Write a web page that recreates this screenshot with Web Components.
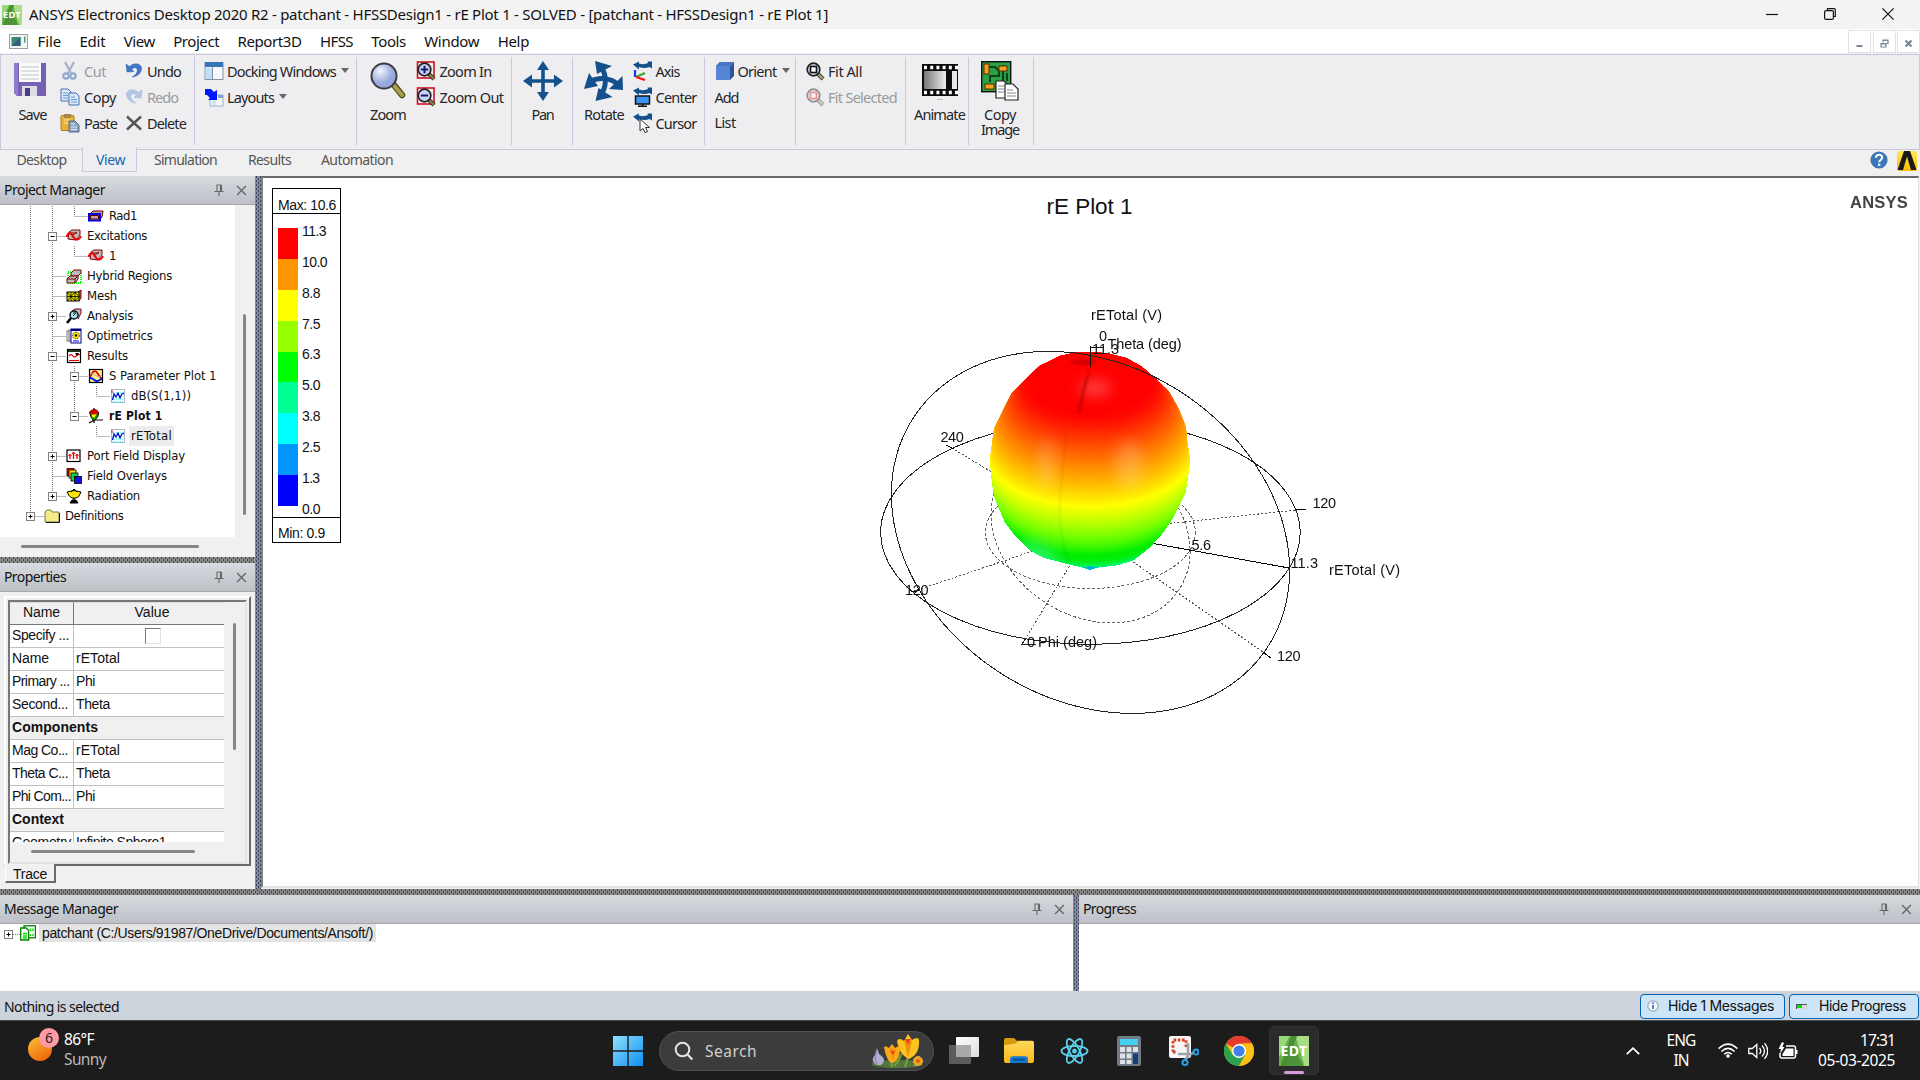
<!DOCTYPE html>
<html lang="en">
<head>
<meta charset="utf-8">
<title>ANSYS Electronics Desktop</title>
<style>
html,body{margin:0;padding:0;background:#f0f0f0;overflow:hidden}
body{width:1920px;height:1080px}
</style>
</head>
<body>
<app-shell></app-shell>
<script>
const UI='"Noto Sans","Open Sans",sans-serif', ARIAL='"Liberation Sans",Arial,sans-serif', TAHOMA='"DejaVu Sans Condensed","DejaVu Sans",sans-serif';
const define=(name,build,init)=>customElements.define(name,class extends HTMLElement{
  connectedCallback(){
    if(this.shadowRoot)return;
    this.attachShadow({mode:'open'}).innerHTML=build(this);
    if(init)init(this,this.shadowRoot);
  }
});

/* Text run whose tracking is adjusted to an exact advance width */
define('fit-text',()=>`<style>:host{display:inline-block;white-space:pre;flex:none}</style><slot></slot>`,el=>{
  const w=+el.getAttribute('w'); if(!w)return;
  const n=el.textContent.length, nat=el.getBoundingClientRect().width;
  el.style.letterSpacing=((w-nat)/n).toFixed(3)+'px';
  el.style.width=w+'px';
});
const T=(t,w,s='')=>`<fit-text w="${w}" style="${s}">${t}</fit-text>`;

/* Icon set: name -> [viewBox w, viewBox h, markup] */
const lens=(a,inner)=>`<path d="M13 13l5 5" stroke="#333" stroke-width="4"/><path d="M13.5 13.5l4.2 4.2" stroke="${a}" stroke-width="2.4"/><circle cx="8.5" cy="8.5" r="6.3" fill="#c9d2f2" stroke="#222" stroke-width="1.7"/>${inner}`;
const swoosh=`<path d="M0 3.500L6 .5v2q5 1.500 9-.5l-.5-1.500h4.500v7l-2.500-1.500q-5 2-10.500 0v2.500z" fill="#14508c"/>`;
const I={
 edt:[20,20,`<rect width="20" height="20" fill="#6ab04c"/><path d="M0 0h7L0 14z" fill="#9ad97a"/><path d="M11 0h9v20h-3z" fill="#a8dc86"/><path d="M8 0h4l-7 20H1z" fill="#4a8f35"/><path d="M9 6l7 14H5z" fill="#4c9238"/>`],
 doc:[19,15,`<rect x=".5" y=".5" width="18" height="14" fill="#f4f4f4" stroke="#9aa0a8"/><rect x="2.500" y="3" width="9" height="9" fill="#3d8577"/><path d="M2.500 12l9-9v9z" fill="#2f6075"/><rect x="15" y="2.500" width="1.500" height="6" fill="#3da06d"/>`],
 save:[34,36,`<path d="M1 2h32v33H4l-3-3z" fill="#7560b4"/><path d="M1 2h4v33l-4-3z" fill="#8f7bc9"/><rect x="6" y="2" width="22" height="19" fill="#fafafa"/><path d="M8 6h18M8 10h18M8 14h18M8 18h18" stroke="#c3c3cb" stroke-width="1.200"/><rect x="9" y="25" width="15" height="10" fill="#dcdce4"/><rect x="12" y="27" width="5" height="8" fill="#4c3b85"/>`],
 cut:[20,20,`<g stroke="#8ea9cf" fill="none"><path d="M5 1l6 11M14 1L8 12" stroke="#aab4c3" stroke-width="2.400"/><circle cx="6" cy="15" r="2.700" stroke-width="2.200"/><circle cx="13" cy="15" r="2.700" stroke-width="2.200"/></g>`],
 copy:[20,20,`<g stroke="#4573b3" fill="#dce9fa"><path d="M1 2h7l3 3v9H1z"/><path d="M9 6h7l3 3v9H9z"/></g><path d="M3 6h5M3 8.500h5M3 11h5M11 10h4M11 12.500h6M11 15h6" stroke="#6b96cf"/>`],
 paste:[20,20,`<rect x="1" y="2.500" width="13" height="15" rx="1" fill="#eab234" stroke="#b07a12"/><rect x="4" y="1" width="7" height="4" fill="#a8864a"/><path d="M4 7h7M4 10h5" stroke="#fbe4a5"/><path d="M9 8h6l4 4v7H9z" fill="#8ea3bf" stroke="#53698a"/><path d="M11 11h4M11 14h6M11 16.500h6" stroke="#e4ecf7"/>`],
 undo:[18,20,`<path d="M1 3l1 8 7-.5-2.300-2C9.500 5 13.500 7 12 11c-.8 2.500-3 4-5 5 5-.3 9-3.500 9.500-8C17 3 10 .5 4.500 5.500z" fill="#3e78c8" stroke="#2a5dab" stroke-width=".5"/>`],
 redo:[18,20,`<path d="M17 3l-1 8-7-.5 2.300-2C8.500 5 4.500 7 6 11c.8 2.500 3 4 5 5-5-.3-9-3.500-9.500-8C1 3 8 .5 13.500 5.500z" fill="#b3c6e4" stroke="#9db4d8" stroke-width=".5"/>`],
 del:[18,20,`<path d="M2 3.500l14 13M16 3.500l-14 13" stroke="#555" stroke-width="2.400"/>`],
 dock:[20,20,`<rect x="1" y="1.500" width="18" height="17" fill="#f4f7fb" stroke="#8494a8"/><rect x="1" y="1" width="18" height="5" fill="#3873b5"/><rect x="2" y="7" width="6" height="11" fill="#bfe0f4"/><path d="M8.500 6v12" stroke="#8494a8"/>`],
 layouts:[20,20,`<rect x="6" y="8" width="13" height="11" fill="#f4f7fb" stroke="#8fb1cf"/><path d="M8 12v6h4v-6z" fill="#cfe5f2"/><rect x="14" y="8" width="5" height="3" fill="#7fa5cc"/><path d="M1 2h6l3 3 3-2v10H4l2-2-3-3H1z" fill="#0018ff"/>`],
 zoom:[36,38,`<path d="M24 24l8 10" stroke="#555018" stroke-width="6.500" stroke-linecap="round"/><path d="M24.500 25l7.500 9" stroke="#a8a050" stroke-width="4" stroke-linecap="round"/><defs><radialGradient id="g" cx=".35" cy=".3"><stop stop-color="#f1f5ff"/><stop offset="1" stop-color="#97a8dc"/></radialGradient></defs><circle cx="14" cy="15" r="12.500" fill="url(#g)" stroke="#3c3c44" stroke-width="2"/>`],
 zin:[20,20,`<rect x="1.500" y="1" width="16.500" height="16" fill="none" stroke="#d01020" stroke-width="1.600"/>${lens('#8a8436','<path d="M8.500 4.800v7.400M4.800 8.500h7.400" stroke="#1b1b6e" stroke-width="2"/>')}`],
 zout:[20,20,`<rect x="1.500" y="1" width="16.500" height="16" fill="none" stroke="#d01020" stroke-width="1.600"/>${lens('#8a8436','<path d="M4.800 8.500h7.400" stroke="#1b1b6e" stroke-width="2"/>')}`],
 fit:[20,20,lens('#a8a878','<rect x="5.500" y="5.500" width="6" height="6" fill="#fff" stroke="#111" stroke-width="1.600"/>')],
 fits:[20,20,`<g opacity=".45">${lens('#a8a878','<rect x="5.500" y="5.500" width="6" height="6" fill="#fff" stroke="#f03020" stroke-width="1.800"/>')}</g>`],
 pan:[40,40,`<path d="M20 0l6 9h-4.200v9.200H31V13.500l9 6.500-9 6.500v-4.700h-9.200V31H26l-6 9-6-9h4.200v-9.200H9v4.700L0 20l9-6.500v4.700h9.200V9H14z" fill="#14508c"/>`],
 rotate:[40,40,`<g fill="none" stroke="#14508c" stroke-width="5"><path d="M17 6c6 8 6 20-1 29"/><path d="M5 21c9-5 21-5 30 3"/></g><path d="M11 0l17 5-15 8zM11.500 40l17-4-14-9zM0 28l5-16 9 13zM38.500 15l.5 14-14-1z" fill="#14508c"/>`],
 axis:[20,20,`${swoosh}<path d="M2 9v7" stroke="#1438ff" stroke-width="2.200"/><path d="M3 16l9-4" stroke="#35a835" stroke-width="2"/><path d="M3 16l9 3" stroke="#ff1010" stroke-width="2.200"/>`],
 center:[20,20,`${swoosh}<rect x="2.500" y="9" width="14" height="8" fill="#3d93ee" stroke="#111" stroke-width="1.500"/><path d="M9.500 17v2M5 19.300h9" stroke="#111" stroke-width="1.500"/>`],
 cursor:[20,20,`${swoosh}<path d="M7 6v12l3-2.500 2 4 2.500-1-2-4h4z" fill="#fff" stroke="#333"/>`],
 orient:[20,20,`<path d="M1 5l4-4h14v14l-4 4H1z" fill="#2d5597"/><path d="M1 5l4-4h14l-3 4z" fill="#4a77bd"/><path d="M1 5h14v14H1z" fill="#5684d6"/>`],
 animate:[36,38,`<path d="M0 1h36v32H0z" fill="#0c0c0c"/><defs><linearGradient id="g"><stop stop-color="#777"/><stop offset="1" stop-color="#eee"/></linearGradient></defs><rect x="2" y="8" width="22" height="18" fill="url(#g)"/><rect x="30" y="8" width="5" height="18" fill="#e8e8e8"/><path d="M2 4.500h34M2 29.500h34" stroke="#fff" stroke-width="3.500" stroke-dasharray="3 3.200"/><path d="M15 36.500h6" stroke="#bbb"/>`],
 copyimg:[38,40,`<rect x=".7" y=".7" width="29" height="30" fill="#2ca044" stroke="#111" stroke-width="1.400"/><path d="M8 6h6l4 4v5h-9v6M22 4v26M26 12v8" stroke="#0b4316" fill="none" stroke-width="2"/><g fill="#f5a21d" stroke="#5a2a00"><rect x="3" y="3" width="5" height="10"/><rect x="18" y="5" width="8" height="5"/><rect x="4" y="23" width="9" height="5"/></g><g fill="#fff" stroke="#222" stroke-width="1.200"><path d="M15 20h8l4 4v13H15z"/><path d="M24 23h8l5 5v11H24z"/></g><path d="M17 25h6M17 28h6M17 31h6M26 29h6M26 32h9M26 35h9" stroke="#888"/>`],
 help:[18,18,`<circle cx="9" cy="9" r="8.600" fill="#3a77b8"/><path d="M6 6.800c0-4 6.200-3.800 6.200-.3 0 2.200-3 2.300-3 4.800" stroke="#fff" stroke-width="2" fill="none"/><rect x="8" y="12.600" width="2.300" height="2.300" fill="#fff"/>`],
 alogo:[20,20,`<defs><linearGradient id="g" x2="0" y2="1"><stop stop-color="#ffe85a"/><stop offset="1" stop-color="#fdb900"/></linearGradient></defs><rect width="20" height="20" rx="3" fill="url(#g)"/><path d="M7 0h6l6.500 19h-5.500L10 5.500 6 19H.5z" fill="#1a1a1a"/>`],
 pin:[10,12,`<path d="M2.500 1h5M3 1v6M6.500 1v6M7.500 1v6M.5 7.500h9M5 8v4" stroke="#666" stroke-width="1.100" fill="none"/>`],
 x:[12,12,`<path d="M1.200 1.200l9.600 9.600M10.800 1.200l-9.600 9.600" stroke="#666" stroke-width="1.500"/>`],
 wmin:[12,12,`<path d="M0 6.500h12" stroke="#111" stroke-width="1.200"/>`],
 wres:[12,12,`<path d="M3.500 2.500V.7h6.500q1.300 0 1.300 1.300v6.500H9.500" fill="none" stroke="#111" stroke-width="1.200"/><rect x=".6" y="2.600" width="8.800" height="8.800" rx="1.500" fill="none" stroke="#111" stroke-width="1.200"/>`],
 wx:[12,12,`<path d="M.4.4l11.200 11.200M11.600.4L.4 11.600" stroke="#111" stroke-width="1.200"/>`],
 mmin:[9,9,`<path d="M1.500 7h6" stroke="#76889a" stroke-width="2"/>`],
 mres:[9,9,`<path d="M3 3.500V1h5v3.500H6.500M3 1.500h5" fill="none" stroke="#76889a" stroke-width="1.200"/><path d="M1 4.500h5v3.500H1zM1 5h5" fill="none" stroke="#76889a" stroke-width="1.200"/>`],
 mx:[9,9,`<path d="M1.500 1.500l6 6M7.500 1.500l-6 6" stroke="#76889a" stroke-width="2.200"/>`],
 rad:[16,16,`<path d="M1 7l4-4h10l-1 6-3 3z" fill="#c9a0a0" stroke="#600"/><rect x="1" y="6" width="11" height="6.500" fill="#b8a8a8" stroke="#0000e0" stroke-width="2"/><path d="M2.500 7.500h8v3.500h-8z" fill="none" stroke="#600"/>`],
 exc:[16,16,`<path d="M3 4l3-2h8v5l-4 5-8-1z" fill="#bbb" stroke="#800"/><path d="M4 5h7M6 8l5-4" stroke="#800"/><path d="M.5 9c2-6 5-4 7 0s6 3 7.500-1" fill="none" stroke="#f00000" stroke-width="2"/>`],
 hyb:[16,16,`<path d="M2 4h13v11H2z" fill="none" stroke="#0f0" stroke-width="2" stroke-dasharray="1 1"/><path d="M5 5l3-3h7v3l-3 3H5z" fill="#bbb" stroke="#700"/><path d="M1 11l3-3h8v3l-3 4H1z" fill="#bbb" stroke="#700"/><path d="M1 11h8v3M9 11l3-3" fill="none" stroke="#700"/>`],
 mesh:[16,16,`<path d="M12 4l3-2v8l-2 3" fill="#a77" stroke="#700"/><rect x="1" y="4" width="12" height="9" fill="#f4e800" stroke="#000"/><path d="M5 4v9M9 4v9M1 8.500h12M1 4l4 4.500L9 4l4 4.500M1 13l4-4.500 4 4.500 4-4.500" fill="none" stroke="#000" stroke-width=".8"/>`],
 ana:[16,16,`<path d="M6 3l3-2h6v4l-3 6" fill="#bbb" stroke="#700"/><circle cx="8" cy="7" r="4" fill="#9fe8f0" stroke="#112" stroke-width="1.500"/><path d="M7 5h3M7 8l3-3" stroke="#700"/><path d="M5 10l-4 5" stroke="#000" stroke-width="2.600"/>`],
 opt:[16,16,`<rect x="1" y="3" width="10" height="10" fill="#fff" stroke="#777"/><rect x="3" y="2" width="10" height="11" fill="#ddd" stroke="#777"/><rect x="5" y="1" width="10" height="14" fill="#fff" stroke="#000080"/><path d="M5 2h10" stroke="#000080" stroke-width="2"/><circle cx="10" cy="7.500" r="3.400" fill="#ffe000" stroke="#333" stroke-dasharray="1.500 1"/><circle cx="10" cy="7.500" r="1.200"/><path d="M7 13h6" stroke="#00f"/>`],
 res:[16,16,`<rect x="1.500" y="1.500" width="13" height="13" fill="#fff" stroke="#000" stroke-width="1.200"/><path d="M2 3h12" stroke="#183818" stroke-width="2"/><path d="M3 8c3-4 4 2 6 1s2-4 5-2M3 12.500h10" fill="none" stroke="#e00000" stroke-width="1.200"/><path d="M9 5h4l-2 3z"/>`],
 spar:[16,16,`<rect x="1.500" y="1.500" width="13" height="13" fill="#fff38a" stroke="#000" stroke-width="1.200"/><path d="M2 9c3-6 5-8 8-3s3 4 4 4" fill="none" stroke="#e80000" stroke-width="1.800"/><path d="M2 10c4 0 4 3 7 3 2 0 3-2 5-2" fill="none" stroke="#0020e0" stroke-width="2"/><path d="M2 6c5-2 7 6 12 1" fill="none" stroke="#aaa"/>`],
 trace:[16,16,`<rect x="1.500" y="1.500" width="13" height="13" fill="#f4ffff" stroke="#b4b4c0"/><path d="M2 5h12M2 11h12M2 14h12" stroke="#50d8e8" stroke-dasharray="1 1"/><path d="M2.500 12l1.500-6 2 3 2-4 2 5 2-4 2-1" fill="none" stroke="#0010d0" stroke-width="1.300"/><path d="M2 2v3" stroke="#f00"/>`],
 re:[16,16,`<path d="M6 0v15M1 15l5-3h9" stroke="#000" fill="none" stroke-width="1.200"/><path d="M1.500 4q5-5 9 0 1 4-4.500 9Q2 9 1.500 4z" fill="#00a000" stroke="#200"/><path d="M2 3.500q4-4 8.300 0l-1 3H3z" fill="#e00000"/><path d="M3.500 6.500h5l-2 3h-2z" fill="#ff0"/>`],
 port:[16,16,`<rect x="1" y="2" width="13" height="11.500" fill="#fff" stroke="#000" stroke-width="1.200"/><path d="M4 11V7M7.500 11V4.500M11 11V7" stroke="#e00000" stroke-width="1.300"/><path d="M2.500 8l1.500-2 1.500 2M6 6l1.500-2L9 6M9.500 8L11 6l1.500 2" fill="none" stroke="#e00000"/>`],
 field:[16,16,`<g stroke="#000" stroke-width=".8"><rect x="1" y="0" width="7" height="8" fill="#e81010"/><rect x="3" y="2" width="7" height="8" fill="#ffe000"/><rect x="5" y="5" width="7" height="8" fill="#10d060"/><rect x="8.500" y="8.500" width="7" height="7" fill="#1010e0"/></g>`],
 radn:[16,16,`<path d="M1 4q7-3 14 0-2 6-5 6H6Q3 9 1 4z" fill="#ffe900" stroke="#000"/><path d="M8 10v3M4 15h8l-2-3H6z" fill="#000" stroke="#000"/><path d="M5 4l3-3 3 3" fill="none" stroke="#000"/>`],
 folder:[16,16,`<path d="M1 4l2-2h4l1 2h7v10H1z" fill="#f2eb86" stroke="#7a7a58"/><path d="M15.500 5v9.500H2" fill="none" stroke="#111"/>`],
 proj:[16,16,`<g fill="#fff" stroke="#008000"><rect x="4" y=".8" width="11.400" height="12" stroke-width="1.300"/><path d="M.7 3h5.500l2.500 2.500V15h-8z" stroke-width="1.300"/></g><path d="M10.500 3.500v2.500M13 3.500v2.500M10.500 9v2M13 9v2M3 8.500h4M3 11h4M3 13h4" fill="none" stroke="#00e000" stroke-width="1.400"/>`],
 info:[12,12,`<circle cx="6" cy="6" r="5.200" fill="#f4f8ff" stroke="#9aa" stroke-width="1.200"/><path d="M6 5v4M6 2.500V4" stroke="#2a52c8" stroke-width="1.500"/>`],
 prog:[11,5,`<rect width="11" height="5" fill="#d6d6d6"/><path d="M0 .5h11M.5 0v5" stroke="#555"/><rect x="1" y="1" width="5" height="3" fill="#00e000"/>`],
 win:[30,30,`<defs><linearGradient id="g" x2="1" y2="1"><stop stop-color="#8fe2fd"/><stop offset="1" stop-color="#0d8ff2"/></linearGradient></defs><path d="M0 0h14.300v14.300H0zM15.700 0H30v14.300H15.700zM0 15.700h14.300V30H0zM15.700 15.700H30V30H15.700z" fill="url(#g)"/>`],
 search:[20,20,`<circle cx="8.500" cy="8.500" r="6.800" fill="none" stroke="#e4e4e4" stroke-width="2"/><path d="M13.300 13.300l5 5.200" stroke="#e4e4e4" stroke-width="2.200"/>`],
 flower:[56,34,`<ellipse cx="27" cy="30" rx="26" ry="4" fill="#54743e"/><path d="M22 33q-2-8-1-14M35 33q3-8 3-14M44 32q4-3 4-6M24 32q6-6 7-12" stroke="#6da33a" stroke-width="2.200" fill="none"/><path d="M7 31q-8-5-1-11l1-6 2 6q9 6 2 11z" fill="#b3aed2"/><path d="M7 15q-4 8 0 15" stroke="#807aaa" fill="none"/><path d="M14 13q1-2 5 1l3-4 3 4q3-3 5 0 0 12-7 15-6 0-9-16z" fill="#fba91a"/><path d="M27 7q2-4 7 0l4-7 4 6q6-4 7 0 1 14-10 19-10-4-12-18z" fill="#ffc21c"/><path d="M34 6l4 18 4-17M19 14l4 13 3-12" fill="#f0930c"/><path d="M35 5h6l-3 6zM20 17h5l-2 4z" fill="#e8481a"/><circle cx="48" cy="27" r="4.500" fill="#f2a01e" stroke="#ffc95a" stroke-dasharray="2 1"/><circle cx="48" cy="27" r="1.800" fill="#d05018"/>`],
 task:[30,28,`<defs><linearGradient id="g" x2="1" y2="1"><stop stop-color="#fff"/><stop offset="1" stop-color="#ddd"/></linearGradient></defs><rect x="7" width="23" height="20" rx="1" fill="url(#g)"/><rect y="8" width="22" height="19" rx="1" fill="#5c5c5c"/><rect x="7" y="8" width="15" height="12" fill="#a9a9a9"/>`],
 files:[30,28,`<path d="M0 3q0-2 2-2h8l3 3v4H0z" fill="#d99a07"/><defs><linearGradient id="g" x2="0" y2="1"><stop stop-color="#ffd75c"/><stop offset="1" stop-color="#fbb816"/></linearGradient></defs><path d="M0 8l11-1 3-3h14q2 0 2 2v19q0 2-2 2H2q-2 0-2-2z" fill="url(#g)"/><path d="M6 27v-4q0-3 3-3h12q3 0 3 3v4z" fill="#1279cf"/><path d="M9 23.500h12" stroke="#0a4f93" stroke-width="2"/>`],
 react:[30,28,`<g fill="none" stroke="#5ccfea" stroke-width="1.800"><ellipse cx="15" cy="14" rx="13.500" ry="5"/><ellipse cx="15" cy="14" rx="13.500" ry="5" transform="rotate(60 15 14)"/><ellipse cx="15" cy="14" rx="13.500" ry="5" transform="rotate(120 15 14)"/></g><circle cx="15" cy="14" r="2.500" fill="#5ccfea"/>`],
 calc:[24,30,`<rect width="24" height="30" rx="2" fill="#717b86"/><rect x="3" y="3" width="18" height="6" fill="#45d0f0"/><g fill="#dce3ea"><path d="M3 11h5v5H3zM9.500 11h5v5h-5zM16 11h5v5h-5zM3 17.500h5v5H3zM9.500 17.500h5v5h-5zM3 24h5v4H3zM9.500 24h5v4h-5z"/></g><rect x="16" y="17.500" width="5" height="10.500" fill="#123f7a"/>`],
 snip:[30,30,`<rect width="22" height="22" rx="2" fill="#f6f6f6"/><path d="M4 16V4h13v8M4 16h4" fill="none" stroke="#d8401c" stroke-width="2.800" stroke-dasharray="2.600 1.600"/><path d="M19 7v13l-3 4M9 18h13l3-1.500" fill="none" stroke="#9aa4ae" stroke-width="2.600"/><circle cx="27" cy="16" r="2.500" fill="none" stroke="#27a0e8" stroke-width="2"/><circle cx="16" cy="26.500" r="2.500" fill="none" stroke="#27a0e8" stroke-width="2"/>`],
 chrome:[30,30,`<circle cx="15" cy="15" r="15" fill="#fbc116"/><path d="M15 15L2 7.500A15 15 0 0 1 28 7.500H15z" fill="#e33b2e"/><path d="M2 7.500A15 15 0 0 0 15 30l6.500-11.300L15 15 8.500 18.800z" fill="#2ba24c"/><path d="M28 7.500A15 15 0 0 1 15 30l6.500-11.300L20 7.500z" fill="#fbc116"/><circle cx="15" cy="15" r="7" fill="#fff"/><circle cx="15" cy="15" r="5.600" fill="#3f7fe8"/>`],
 up:[14,8,`<path d="M.8 7.200L7 1.200l6.200 6" fill="none" stroke="#fff" stroke-width="1.700"/>`],
 wifi:[20,15,`<g fill="none" stroke="#fff" stroke-width="1.500"><path d="M.6 5.600q9.400-9 18.800 0M3.400 8.500q6.600-6.300 13.200 0M6.200 11.300q3.800-3.700 7.600 0"/></g><circle cx="10" cy="13" r="1.800" fill="#fff"/>`],
 vol:[20,18,`<g fill="none" stroke="#fff" stroke-width="1.300"><path d="M.8 6.500h3.500L8.800 2.500v13L4.300 11.500H.8z"/><path d="M11.500 6q2.500 3 0 6M14 3.500q5 5.500 0 11M16.500 1.200q6.500 7.800 0 15.600"/></g>`],
 bat:[20,18,`<path d="M8 4h7.500q2 0 2 2v8q0 2-2 2H4q-2 0-2-2v-3" fill="none" stroke="#fff" stroke-width="1.500"/><path d="M8 6.500h7.500v7.500H4.500V12z" fill="#fff"/><path d="M18.500 8v4" stroke="#fff" stroke-width="2"/><path d="M4 0L.5 7H3l-1 5 4.500-7H4.300L6 1z" fill="#fff"/>`],
 sun:[24,24,`<defs><linearGradient id="g" x2=".6" y2="1"><stop stop-color="#f9c13a"/><stop offset="1" stop-color="#f06a0c"/></linearGradient></defs><circle cx="12" cy="12" r="12" fill="url(#g)"/>`]
};
define('ui-icon',el=>{
  const [w,h,m]=I[el.getAttribute('name')], W=el.getAttribute('w')||w, H=el.getAttribute('h')||h;
  return `<style>:host{display:block;flex:none;width:${W}px;height:${H}px}svg{display:block}</style><svg width="${W}" height="${H}" viewBox="0 0 ${w} ${h}" preserveAspectRatio="none">${m}</svg>`;
});
const ic=(n,w,h,s='')=>`<ui-icon name="${n}" ${w?`w="${w}"`:''} ${h?`h="${h}"`:''} style="${s}"></ui-icon>`;

define('edt-badge',el=>{const s=+el.getAttribute('s');
 return `<style>:host{display:grid;width:${s}px;height:${s}px;flex:none;color:#fff;font:bold ${s*.47}px/${s}px ${UI}}ui-icon,span{grid-area:1/1}span{text-align:center;z-index:1}</style>${ic('edt',s,s)}<span>${T('EDT',s*.9)}</span>`});

define('title-bar',()=>`<style>:host{display:flex;height:29px;background:#f3f3f3;align-items:center;padding-left:2px;font:15px/28px ${UI};color:#111}
 .b{margin-left:auto;display:flex;gap:46px;padding-right:26px;align-items:center;margin-top:-1px}fit-text{margin-left:7px;margin-top:-2px}</style>
 <edt-badge s="20"></edt-badge>${T('ANSYS Electronics Desktop 2020 R2 - patchant - HFSSDesign1 - rE Plot 1 - SOLVED - [patchant - HFSSDesign1 - rE Plot 1]',799)}
 <div class="b">${ic('wmin')}${ic('wres')}${ic('wx')}</div>`);

define('menu-bar',()=>`<style>:host{display:flex;height:24px;background:#fff;align-items:center;font:15px/24px ${UI};color:#111;box-sizing:border-box;padding-left:9px}
 .m{display:flex;gap:18.400px;margin-left:9.500px}.b{margin-left:auto;display:flex;gap:1.500px;align-self:flex-start;margin-top:1px}
 .b div{width:21px;height:21px;border:1px solid #e2e2e2;display:grid;place-items:center}.b ui-icon{margin-top:3px}</style>
 ${ic('doc')}<div class="m">${[['File',23.5],['Edit',26],['View',31],['Project',46],['Report3D',64],['HFSS',33],['Tools',34.5],['Window',55],['Help',31.5]].map(a=>T(...a)).join('')}</div>
 <div class="b"><div>${ic('mmin')}</div><div>${ic('mres')}</div><div>${ic('mx')}</div></div>`);

/* Ribbon */
define('ribbon-group',el=>`<style>:host{display:flex;box-sizing:border-box;flex:none;height:88px;width:${el.getAttribute('w')}px;border-right:1px solid #c9c8dc;margin-top:2px;align-items:flex-start}</style><slot></slot>`);
define('ribbon-column',el=>`<style>:host{display:flex;flex-direction:column;padding-left:${el.getAttribute('x')}px;padding-top:1px;flex:none;width:${el.getAttribute('w')}px}</style><slot></slot>`);
define('ribbon-item',el=>{const i=el.getAttribute('icon');
 return `<style>:host{display:flex;align-items:center;height:26px;white-space:nowrap}.a{width:0;height:0;border:4px solid transparent;border-top:5px solid #666;border-bottom:0;margin-left:5px;margin-top:-2px}
 .l{${i?'margin-left:'+(el.getAttribute('g')||4)+'px;':''}color:${el.hasAttribute('off')?'#9a9a9a':'#262626'}}</style>${i?ic(i,el.getAttribute('iw')):''}<span class="l">${T(el.getAttribute('label'),el.getAttribute('w'))}</span>${el.hasAttribute('menu')?'<span class="a"></span>':''}`});
define('ribbon-big',el=>`<style>:host{display:flex;flex-direction:column;align-items:center;flex:none;padding-top:4px;margin-left:${el.getAttribute('x')}px}
 .i{height:46px}.l{line-height:15px;height:15px;text-align:center;margin-left:${el.getAttribute('lx')||0}px}</style><div class="i">${ic(el.getAttribute('icon'),null,null,el.hasAttribute('dy')?'margin-top:'+el.getAttribute('dy')+'px':'')}</div>${el.getAttribute('label').split('|').map((t,k)=>`<div class="l">${T(t,el.getAttribute('w').split('|')[k])}</div>`).join('')}`);
const ri=(icon,label,w,o='')=>`<ribbon-item ${icon?`icon="${icon}"`:''} label="${label}" w="${w}" ${o}></ribbon-item>`;
define('ribbon-bar',()=>`<style>:host{display:flex;height:94px;background:#eeeef1;border:1px solid #c9c8dc;box-sizing:content-box;width:1918px;margin-top:1px;font:14.500px/26px ${UI};color:#262626}</style>
<ribbon-group w="194"><ribbon-big x="12" icon="save" lx="5" label="Save" w="28"></ribbon-big>
 <ribbon-column x="13" w="65">${ri('cut','Cut',22,'off')}${ri('copy','Copy',32)}${ri('paste','Paste',33)}</ribbon-column>
 <ribbon-column x="0" w="66">${ri('undo','Undo',34,'g="4"')}${ri('redo','Redo',31,'off g="4"')}${ri('del','Delete',39,'g="4"')}</ribbon-column></ribbon-group>
<ribbon-group w="162"><ribbon-column x="9" w="150">${ri('dock','Docking Windows',109,'menu g="3"')}${ri('layouts','Layouts',47,'menu g="3"')}</ribbon-column></ribbon-group>
<ribbon-group w="155"><ribbon-big x="13" icon="zoom" label="Zoom" w="36"></ribbon-big><ribbon-column x="9.500" w="90">${ri('zin','Zoom In',52)}${ri('zout','Zoom Out',64)}</ribbon-column></ribbon-group>
<ribbon-group w="61"><ribbon-big x="10.500" icon="pan" label="Pan" w="22"></ribbon-big></ribbon-group>
<ribbon-group w="132"><ribbon-big x="11" icon="rotate" label="Rotate" w="40"></ribbon-big><ribbon-column x="8.500" w="66">${ri('axis','Axis',24,'g="3"')}${ri('center','Center',41,'g="3"')}${ri('cursor','Cursor',41,'g="3"')}</ribbon-column></ribbon-group>
<ribbon-group w="91"><ribbon-column x="9.500" w="80">${ri('orient','Orient',39,'menu g="3"')}${ri('','Add',24)}${ri('','List',21,'style="margin-top:-1px"')}</ribbon-column></ribbon-group>
<ribbon-group w="110"><ribbon-column x="9" w="98">${ri('fit','Fit All',34,'g="3"')}${ri('fits','Fit Selected',69,'g="3" off')}</ribbon-column></ribbon-group>
<ribbon-group w="63"><ribbon-big x="8" icon="animate" dy="2" label="Animate" w="51"></ribbon-big></ribbon-group>
<ribbon-group w="65"><ribbon-big x="12" icon="copyimg" label="Copy|Image" w="32|38"></ribbon-big></ribbon-group>`);

define('ribbon-tabs',()=>`<style>:host{display:flex;height:26px;background:#f0f0f0;font:14px/20px ${UI};color:#555;box-sizing:border-box;padding-left:16.500px}
 .v{box-sizing:border-box;width:55px;height:25px;margin:-3px 17px 0 15.500px;padding:3px 0 0 13px;border:1px solid #c9c8dc;border-top:0;background:#eeeef1;color:#1565b0}
 .r{margin-left:auto;display:flex;gap:9px;padding-right:3px;margin-top:1px}</style>
 ${T('Desktop',50)}<div class="v">${T('View',29)}</div>${T('Simulation',63,'margin-right:31px')}${T('Results',43,'margin-right:30px')}${T('Automation',72)}
 <div class="r">${ic('help')}${ic('alogo')}</div>`);

/* Textured splitter between docked panes */
define('dock-splitter',()=>`<style>:host{display:block;flex:none;background:#8a8a8a}svg{display:block;width:100%;height:100%}</style><svg><defs><pattern id="p" width="4" height="4" patternUnits="userSpaceOnUse"><rect width="4" height="4" fill="#8a8a8a"/><path d="M1 0h1v2H1zM3 2h1v2H3z" fill="#35456f"/></pattern></defs><rect width="100%" height="100%" fill="url(#p)"/></svg>`);

define('dock-panel',el=>`<style>:host{display:flex;flex-direction:column;min-width:0;background:#f0f0f0}
 header{display:flex;align-items:center;height:28px;flex:none;background:linear-gradient(#d7dbe0,#bdc0c6);border-bottom:1px solid #a6a6a6;padding:0 8px 0 4px;font:14px/28px ${UI};color:#111}
 .b{margin-left:auto;display:flex;gap:12px;align-items:center}</style>
 <header>${T(el.getAttribute('label'),el.getAttribute('w'))}<div class="b">${ic('pin')}${ic('x',11,11)}</div></header><slot></slot>`);

define('tree-row',el=>{
 const cell=c=>{
  const v=c==='L'||c==='M'?'M11.500 0v10':c===' '?'':'M11.500 0v20', h=' |'.includes(c)?'':'M11.500 10.500h13';
  const bx='-+MP'.includes(c)?`<rect x="7.500" y="6.500" width="8" height="8" fill="#fff" stroke="#808080"/><path d="M9.500 10.500h4${'+P'.includes(c)?'M11.500 8.500v4':''}" stroke="#000" fill="none"/>`:'';
  return `<svg width="22" height="20"><path d="${c==='P'?'M11.500 0v10':v}${h}" stroke="#777" stroke-dasharray="1 1" fill="none"/>${bx}</svg>`};
 return `<style>:host{display:flex;height:20px;align-items:center;padding-left:19px;font:${el.hasAttribute('bold')?'bold 12px':'13px'}/20px ${TAHOMA};color:#111}svg{display:block;overflow:visible;flex:none}
 ui-icon{margin-left:3px}.l{margin-left:3px;padding:0 2px;${el.hasAttribute('sel')?'background:#ececec':''}}</style>${[...el.getAttribute('g')].map(cell).join('')}${ic(el.getAttribute('icon'))}<span class="l">${T(el.getAttribute('label'),el.getAttribute('w'))}</span>`});
define('project-tree',()=>`<style>:host{display:grid;grid-template:332px 20px/235px 20px;height:352px;background:#f0f0f0}
 .t{background:#fff;padding-top:1px;overflow:hidden}.v{width:3px;height:201px;background:#868686;border-radius:2px;margin:109px 0 0 8px}.h{width:178px;height:3px;background:#868686;border-radius:2px;margin:8px 0 0 21px}</style>
 <div class="t">${[['||L','rad','Rad1',28],['|-','exc','Excitations',60],['||L','exc','1',6],['|T','hyb','Hybrid Regions',85],['|T','mesh','Mesh',30],['|+','ana','Analysis',46],['|T','opt','Optimetrics',65.5],['|-','res','Results',41],['||-','spar','S Parameter Plot 1',107.5],['|||L','trace','dB(S(1,1))',60],['||M','re','rE Plot 1',53.5,'bold'],['|| L','trace','rETotal',41,'sel'],['|+','port','Port Field Display',98],['|T','field','Field Overlays',80],['|P','radn','Radiation',53],['P','folder','Definitions',58.5]].map(([g,i,l,w,o=''])=>`<tree-row g="${g}" icon="${i}" label="${l}" w="${w}" ${o}></tree-row>`).join('')}</div><div class="v"></div><div class="h"></div>`);

define('property-grid',()=>{
 const rows=[['Specify ...',57],['Name',37,'rETotal',44],['Primary ...',57.5,'Phi',19],['Second...',56,'Theta',34],['#Components',86],['Mag Co...',56,'rETotal',44],['Theta C...',56,'Theta',34],['Phi Com...',59,'Phi',19],['#Context',52],['Geometry',59,'Infinite Sphere1',90]];
 return `<style>:host{display:flex;flex-direction:column;height:297px;background:#f0f0f0;padding:4px 0 0 4px;box-sizing:border-box;font:14px/21px ${ARIAL};color:#111}
 .o{box-sizing:border-box;width:247px;height:270px;border:2px solid;border-color:#fff #6a6a6a #6a6a6a #fff;padding:2px}
 .i{box-sizing:border-box;width:239px;height:264px;border:2px solid;border-color:#777 #e3e3e3 #e3e3e3 #777;display:grid;grid-template:240px 20px/214px 20px}
 .g{overflow:hidden;background:#fff}.r{display:flex;height:22px;border-bottom:1px solid #c0c0c0}.r>div{box-sizing:border-box}
 .n{width:64px;border-right:1px solid #c0c0c0;padding-left:2px}.w{padding-left:2px;flex:1}
 .s{background:#f0f0f0;font-weight:bold;padding-left:2px}
 .hd{background:#f0f0f0;height:22px;border-bottom:1px solid #777;line-height:19px}.hd>div{text-align:center;padding:0;border-top:1px solid #ddd}.hd .n{border-right:1px solid #777}.hd .w{padding-left:6px}
 .c{width:14px;height:14px;border:1px solid;border-color:#777 #e3e3e3 #e3e3e3 #777;margin:3px 0 0 69px}
 .v{width:3px;height:127px;background:#868686;border-radius:2px;margin:21px 0 0 9px}.h{width:164px;height:3px;background:#868686;border-radius:2px;margin:8px 0 0 21px}
 .tab{box-sizing:border-box;width:51px;height:19px;margin:-2px 0 0 1px;border:solid;border-width:0 2px 2px 1px;border-color:#fff #6a6a6a #6a6a6a #fff;background:#f0f0f0;line-height:20px;padding-left:7px;position:relative}</style>
 <div class="o"><div class="i"><div class="g"><div class="r hd"><div class="n">${T('Name',37)}</div><div class="w">${T('Value',35)}</div></div>
 ${rows.map(([a,aw,b,bw])=>a[0]==='#'?`<div class="r s">${T(a.slice(1),aw)}</div>`:`<div class="r"><div class="n">${T(a,aw)}</div><div class="w">${b?T(b,bw):'<div class="c"></div>'}</div></div>`).join('')}</div><div class="v"></div><div class="h"></div></div></div>
 <div class="tab">${T('Trace',34)}</div>`});

define('color-legend',()=>{
 const c=['#ff0000','#ff9600','#ffff00','#96ff00','#00ff00','#00ff96','#00ffff','#0096ff','#0000ff'];
 return `<style>:host{display:flex;flex-direction:column;box-sizing:border-box;width:69px;height:355px;border:1px solid #000;background:#fff;font:14px/16px ${ARIAL};color:#111}
 .a{height:24px;border-bottom:1px solid #000;padding-left:5px;line-height:33px;box-sizing:content-box}.m{height:303px;display:flex;border-bottom:1px solid #000}
 .z{padding-left:5px;line-height:30px}.b{width:20px;margin:14px 0 0 5px}.b div{height:30.900px}.l{margin:9px 0 0 4px}.l div{height:30.850px;line-height:16px}</style>
 <div class="a">${T('Max: 10.6',58)}</div><div class="m"><div class="b">${c.map(x=>`<div style="background:${x}"></div>`).join('')}</div><div class="l">${[['11.3',24],['10.0',25],['8.8',18],['7.5',18],['6.3',18],['5.0',18],['3.8',18],['2.5',18],['1.3',17.5],['0.0',18]].map(a=>`<div>${T(...a)}</div>`).join('')}</div></div><div class="z">${T('Min: 0.9',47)}</div>`});

/* Far-field surface: rings of the pattern r(theta) under an orthographic tilt */
define('far-field-plot',()=>{
 const CX=1090.5,CY=532.4,S=18.6;
 const R=[[0,10.6],[10,10.5],[20,10],[30,9],[45.6,7.5],[58,6.3],[70,5.2],[80,4.3],[90,3.6],[110,2.5],[130,2]];
 const C=[[2,0,150,255],[2.8,0,225,235],[3.6,0,250,130],[4.4,0,238,20],[5,0,238,0],[6.1,120,255,0],[7.35,255,255,0],[8.6,255,140,0],[9.8,255,20,0],[10.1,255,0,0],[11,255,0,0]];
 const lerp=(t,x)=>{let i=0;while(i<t.length-2&&x>t[i+1][0])i++;const a=t[i],b=t[i+1],k=Math.max(0,Math.min(1,(x-a[0])/(b[0]-a[0])));return a.slice(1).map((v,j)=>v+(b[j+1]-v)*k)};
 let rings='';
 for(let th=130;th>=6;th-=.5){const [r]=lerp(R,th),a=th*Math.PI/180,rx=r*Math.sin(a)*S,cy=CY-r*Math.cos(a)*S*.846,c=lerp(C,r).map(Math.round);
  rings+=`<ellipse cx="${CX}" cy="${cy.toFixed(1)}" rx="${(rx*1.03).toFixed(1)}" ry="${(rx*.533).toFixed(1)}" fill="rgb(${c})"/>`}
 const out=[[390,97],[345,98],[300,108],[240,137],[200,175],[155,220],[130,270],[103,325],[97,370],[90,420],[95,470],[102,525],[118,565],[135,605],[165,645],[210,690],[250,712],[330,733],[370,742],[390,749],[410,742],[470,735],[520,720],[570,680],[610,635],[640,590],[675,520],[683,470],[690,420],[682,370],[677,320],[655,265],[625,212],[580,170],[545,140],[500,115],[440,100]].map(([x,y])=>(960+x/3).toFixed(1)+','+(320+y/3).toFixed(1)).join(' ');
 const tilt=k=>{let p='';for(let i=0;i<=180;i++){const t=i*Math.PI/90;p+=(i?'L':'M')+(CX+199.1*k*Math.cos(t)).toFixed(1)+' '+(CY+181*k*Math.cos(t-Math.acos(.21))).toFixed(1)}return p};
 const tx=(s,x,y,w)=>`<text x="${x}" y="${y}" textLength="${w}">${s}</text>`;
 return `<style>:host{display:block;width:600px;height:460px}svg{display:block}text{font:14.500px ${ARIAL};fill:#111}</style>
 <svg width="600" height="460" viewBox="850 290 600 460"><defs><clipPath id="o"><polygon points="${out}"/></clipPath><filter id="b" x="-80%" y="-80%" width="260%" height="260%"><feGaussianBlur stdDeviation="7"/></filter><filter id="s" x="-50%" y="-50%" width="200%" height="200%"><feGaussianBlur stdDeviation="1"/></filter></defs>
 <g fill="none" stroke="#222" shape-rendering="crispEdges"><ellipse cx="1090.4" cy="532.5" rx="209.800" ry="111.800"/>
 <g stroke="#666" stroke-dasharray="3 2"><ellipse cx="1090.400" cy="532.500" rx="105" ry="56"/><path d="${tilt(.5)}"/></g>
 <g stroke="#555" stroke-dasharray="2 2"><path d="M1090 532L952 448M1090 532L1296 510M1090 532L1263 652M1090 532L914 591M1090 532L1023 643"/></g>
 <path d="M946 445l8 4M1296 510l10-1M1263 652l8 6M912 592l8-2M1090 532L1289 568" stroke="#000"/><path d="M1026 638l-4 6h13.500" stroke="#222"/></g>
 <g clip-path="url(#o)"><rect x="980" y="345" width="220" height="110" fill="#f00"/><rect x="980" y="455" width="220" height="120" fill="#00e8c0"/>${rings}
 <ellipse cx="1090.500" cy="569" rx="9" ry="2.500" fill="#00a8f0"/>
 <g filter="url(#b)"><ellipse cx="1129" cy="464" rx="14" ry="24" fill="#fff" opacity=".2"/><ellipse cx="1047" cy="464" rx="7" ry="26" fill="#fff" opacity=".22"/><ellipse cx="1095" cy="388" rx="16" ry="8" fill="#fff" opacity=".26"/><ellipse cx="1040" cy="552" rx="20" ry="5" transform="rotate(25 1040 552)" fill="#8ff" opacity=".5"/></g>
 <g filter="url(#s)"><path d="M1090 368l-7 17-6 30 3-2 6-25 2-8z" fill="#900" opacity=".5"/><path d="M1067 430q-5 40-7 70t8 62" stroke="#000" opacity=".13" fill="none"/><ellipse cx="1083" cy="362" rx="13" ry="3" fill="#900" opacity=".4"/></g></g>
 <path d="${tilt(1)}" fill="none" stroke="#222" shape-rendering="crispEdges"/><path d="M1090.500 346v21M1090 347.500h14" stroke="#111" fill="none" shape-rendering="crispEdges"/>
 ${tx('rETotal (V)',1091,320,71)}${tx('0',1099,340.5,8)}${tx('Theta (deg)',1107.5,349,74)}${tx('11.3',1092,354,27)}${tx('240',940.4,442,23.5)}${tx('120',1312.5,508,23.5)}${tx('5.6',1191.5,550,19.5)}${tx('11.3',1290.5,568,27.5)}${tx('rETotal (V)',1329,575,71)}${tx('120',1277,661,23.5)}${tx('120',905,595,23.5)}${tx('0',1027,647,8)}${tx('Phi (deg)',1038,647,59)}</svg>`});

define('plot-view',()=>`<style>:host{display:grid;grid-template:708px/80px 1fr 80px;flex:1;height:712px;box-sizing:border-box;background:#fff;border:solid;border-width:2px 1px 2px 2px;border-color:#696969 #e3e3e3 #e3e3e3 #808080;color:#111}
 color-legend{margin:10px 0 0 9px}.c{display:flex;flex-direction:column;align-items:center}.t{font:22.500px/26px ${ARIAL};margin:16px 2px 0 0}
 .a{font:bold 16.500px/20px ${ARIAL};color:#444;margin-top:14px;justify-self:end;margin-right:10px}far-field-plot{margin:70px 0 0 119px}</style>
 <color-legend></color-legend><div class="c"><div class="t">${T('rE Plot 1',86)}</div><far-field-plot></far-field-plot></div><div class="a">${T('ANSYS',58)}</div>`);

define('message-list',()=>`<style>:host{display:block;height:67px;background:#fff;font:14px/18px ${ARIAL};color:#111}div{display:flex;align-items:center;height:18px;padding-left:4px}svg{display:block}
 span{background:#e3e3e3;margin-left:3px;padding:0 3px;height:18px;line-height:18px}</style>
 <div><svg width="16" height="18"><path d="M9 10.500h7" stroke="#777" stroke-dasharray="1 1"/><rect x=".5" y="6.500" width="8" height="8" fill="#fff" stroke="#808080"/><path d="M2.500 10.500h4M4.500 8.500v4" stroke="#000"/></svg>${ic('proj')}<span>${T('patchant (C:/Users/91987/OneDrive/Documents/Ansoft/)',331)}</span></div>`);

define('status-bar',()=>`<style>:host{display:flex;height:29px;background:#cdd3db;align-items:center;padding-left:4px;font:14px/29px ${UI};color:#111;box-sizing:border-box}
 .r{margin-left:auto;display:flex;gap:4px;margin-right:1px}.k{box-sizing:border-box;height:25px;border:1px solid #0063b1;border-radius:4px;background:#cce4f7;display:flex;align-items:center;font:14px/24px "Inter",${ARIAL};margin-top:1px}
 .st{margin-top:2px}</style><div class="st">${T('Nothing is selected',115)}</div>
 <div class="r"><div class="k" style="width:145px;padding-left:6px">${ic('info',12,12)}${T('Hide 1 Messages',106,'margin-left:9px')}</div><div class="k" style="width:130px;padding-left:6px">${ic('prog')}${T('Hide Progress',87,'margin-left:12px')}</div></div>`);

define('task-bar',()=>`<style>:host{display:flex;height:60px;background:#1c1c1c;border-top:1px solid #4a4a4a;box-sizing:border-box;color:#fff;font:15.500px/20px ${UI};align-items:center}
 .w{display:flex;width:612px;padding-left:28px;box-sizing:border-box;gap:12px;align-items:center}
 .s{display:grid;width:24px;height:24px;margin-top:-3px}.s>*{grid-area:1/1}.bd{width:20px;height:20px;border-radius:50%;background:#ff9aa6;color:#222;font:14px/20px ${UI};text-align:center;margin:-9px 0 0 11px}
 .w p{margin:0;position:relative;top:-2px}.g{color:#b8b8b8}
 .q{width:275px;height:40px;box-sizing:border-box;border-radius:20px;background:#3c3c3c;border:1px solid #505050;margin-left:17px;display:flex;align-items:center;padding:0 7px 0 14px;color:#d0d0d0}
 .q ui-icon:last-child{margin-left:auto}
 .e{margin-left:15px;width:50px;height:49px;box-sizing:border-box;border:1px solid #333;border-radius:5px;background:#2b2b2b;display:flex;flex-direction:column;align-items:center;padding-top:9px}
 .e i{display:block;width:20px;height:4px;border-radius:2px;background:#d69bdf;margin-top:5px}
 .y{margin-left:auto;display:flex;align-items:center;padding-right:25px;height:100%}.y>div{line-height:20px}.y>div p{margin:0;position:relative;top:-1px}</style>
 <div class="w"><div class="s">${ic('sun')}<div class="bd">6</div></div><div><p>${T('86°F',30)}</p><p class="g">${T('Sunny',42)}</p></div></div>
 ${ic('win',30,30,'margin-left:1px')}<div class="q" style="margin-left:16px">${ic('search',20,20)}${T('Search',52,'margin-left:11px')}${ic('flower')}</div>
 ${ic('task',30,28,'margin-left:15px')}${ic('files',30,27,'margin-left:25px')}${ic('react',29,28,'margin-left:25.5px')}${ic('calc',24,30,'margin-left:28.500px')}${ic('snip',30,30,'margin-left:28px')}${ic('chrome',30,30,'margin-left:25px')}
 <div class="e"><edt-badge s="30"></edt-badge><i></i></div>
 <div class="y">${ic('up',14,8,'margin-right:26px')}<div style="width:30px;text-align:center;margin-right:22px"><p>${T('ENG',29)}</p><p>${T('IN',15)}</p></div>${ic('wifi',20,15,'margin-right:10px')}${ic('vol',20,18,'margin-right:10px')}${ic('bat',20,18,'margin-right:20px')}<div style="width:77px;text-align:right"><p>${T('17:31',35)}</p><p>${T('05-03-2025',77)}</p></div></div>`);

define('app-shell',()=>`<style>:host{display:flex;flex-direction:column;width:1920px;height:1080px;overflow:hidden;background:#f0f0f0}
 .mid{display:flex;height:713px}.left{width:255px;display:flex;flex-direction:column;height:713px}.hs{height:6px}.vs{width:6px}.bot{display:flex;height:96px}
 .view{flex:1;display:flex;padding:0 1px 1px 0;background:#f0f0f0}.m{width:1073px}.p{flex:1}.body{height:67px;background:#fff}</style>
 <title-bar></title-bar><menu-bar></menu-bar><ribbon-bar></ribbon-bar><ribbon-tabs></ribbon-tabs>
 <div class="mid"><div class="left"><dock-panel label="Project Manager" w="101"><project-tree></project-tree></dock-panel><dock-splitter class="hs"></dock-splitter><dock-panel label="Properties" w="62"><property-grid></property-grid></dock-panel></div>
 <dock-splitter class="vs"></dock-splitter><div class="view"><plot-view></plot-view></div></div>
 <dock-splitter class="hs"></dock-splitter>
 <div class="bot"><dock-panel class="m" label="Message Manager" w="114"><message-list></message-list></dock-panel><dock-splitter class="vs"></dock-splitter><dock-panel class="p" label="Progress" w="53"><div class="body"></div></dock-panel></div>
 <status-bar></status-bar><task-bar></task-bar>`);
</script>
</body>
</html>
